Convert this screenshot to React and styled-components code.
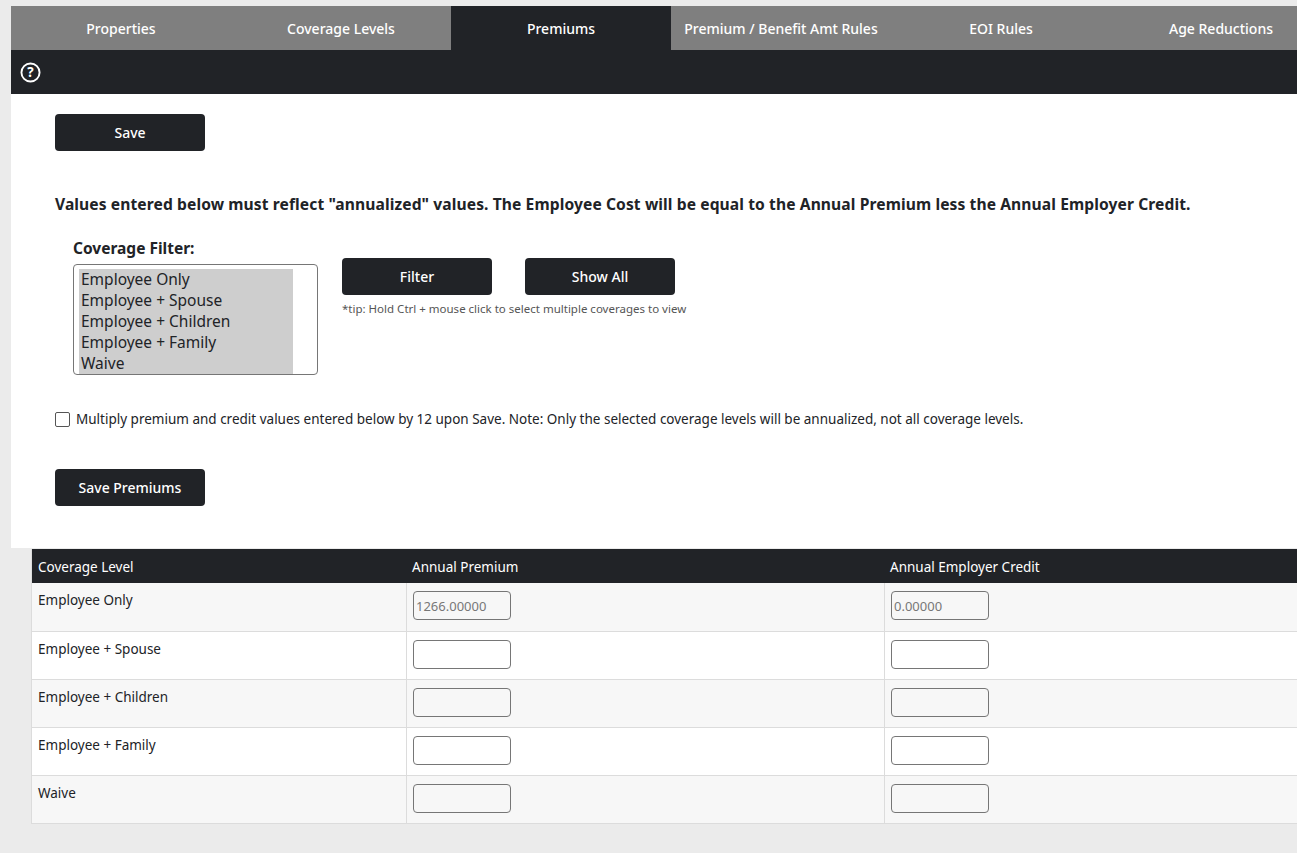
import React from "react";
import styled, { createGlobalStyle } from "styled-components";

const Global = createGlobalStyle`
  html, body { margin:0; padding:0; background:#ebebeb; font-family:"Noto Sans", sans-serif; color:#212327; overflow:hidden; }
`;
const Page = styled.div`width:1297px;height:853px;overflow:hidden;padding-top:6px;box-sizing:border-box;`;
const Panel = styled.div`margin-left:11px;width:1320px;background:#fff;`;
const Tabs = styled.div`display:flex;height:44px;background:#7f7f7f;`;
const Tab = styled.div`width:220px;flex:none;display:flex;align-items:center;justify-content:center;color:#fff;font-size:14px;font-weight:500;background:${p=>p.active?"#212327":"transparent"};`;
const HelpBar = styled.div`height:44px;background:#212327;display:flex;align-items:center;padding-left:9px;`;
const Body = styled.div`padding:20px 44px 42px;`;
const Btn = styled.button`width:150px;height:37px;background:#212327;color:#fff;border:none;border-radius:4px;font-family:inherit;font-size:14px;font-weight:500;`;
const Notice = styled.p`margin:42px 0 22px;font-size:15.6px;font-weight:700;letter-spacing:0.1px;white-space:nowrap;`;
const FilterRow = styled.div`display:flex;gap:24px;padding-left:18px;`;
const Label = styled.div`font-size:15.5px;font-weight:700;margin-bottom:5px;`;
const ListBox = styled.div`width:238px;height:105px;border:1px solid #767676;border-radius:4px;padding:4px 0 0 5px;`;
const Opt = styled.div`background:#cecece;width:212px;font-size:15.5px;line-height:21px;padding-left:2px;`;
const Btns = styled.div`padding-top:21px;`;
const BtnRow = styled.div`display:flex;gap:33px;`;
const Tip = styled.div`font-size:11.5px;color:#555;margin-top:6px;`;
const Check = styled.label`display:flex;align-items:center;gap:6px;font-size:13.5px;margin:35px 0 41px;white-space:nowrap;`;
const Box = styled.span`width:13px;height:13px;border:1px solid #555;border-radius:2px;`;
const Table = styled.div`margin:1px 0 0 31px;width:1290px;`;
const Row = styled.div`display:grid;grid-template-columns:374px 478px 1fr;height:${p=>p.h}px;background:${p=>p.head?"#212327":p.alt?"#f7f7f7":"#fff"};color:${p=>p.head?"#fff":"#212327"};border-bottom:${p=>p.head?"none":"1px solid #dcdcdc"};border-left:1px solid #dcdcdc;box-sizing:border-box;`;
const Cell = styled.div`padding:${p=>p.head?"9px 6px":"8px 6px"};font-size:13.5px;${p=>p.sep?"border-left:1px solid #dcdcdc;":""}`;
const Input = styled.div`width:98px;height:29px;border:1px solid #767676;border-radius:4px;font-size:13px;color:#777;display:flex;align-items:center;padding-left:2px;box-sizing:border-box;`;

const rows=["Employee Only","Employee + Spouse","Employee + Children","Employee + Family","Waive"];

export default function App(){
  return <Page><Global/>
    <Panel>
      <Tabs>{["Properties","Coverage Levels","Premiums","Premium / Benefit Amt Rules","EOI Rules","Age Reductions"].map(t=><Tab key={t} active={t==="Premiums"}>{t}</Tab>)}</Tabs>
      <HelpBar><svg width="21" height="21" viewBox="0 0 22 22"><circle cx="11" cy="11" r="9.5" fill="none" stroke="#fff" strokeWidth="2"/><text x="11" y="16" textAnchor="middle" fill="#fff" fontSize="14" fontWeight="700" fontFamily="Noto Sans">?</text></svg></HelpBar>
      <Body>
        <Btn>Save</Btn>
        <Notice>Values entered below must reflect "annualized" values. The Employee Cost will be equal to the Annual Premium less the Annual Employer Credit.</Notice>
        <FilterRow>
          <div><Label>Coverage Filter:</Label><ListBox>{rows.map(r=><Opt key={r}>{r}</Opt>)}</ListBox></div>
          <Btns><BtnRow><Btn>Filter</Btn><Btn>Show All</Btn></BtnRow><Tip>*tip: Hold Ctrl + mouse click to select multiple coverages to view</Tip></Btns>
        </FilterRow>
        <Check><Box/>Multiply premium and credit values entered below by 12 upon Save. Note: Only the selected coverage levels will be annualized, not all coverage levels.</Check>
        <Btn>Save Premiums</Btn>
      </Body>
    </Panel>
    <Table>
      <Row head h={34}><Cell head>Coverage Level</Cell><Cell head>Annual Premium</Cell><Cell head>Annual Employer Credit</Cell></Row>
      {rows.map((r,i)=><Row key={r} alt={i%2===0} h={i===0?49:48}><Cell>{r}</Cell><Cell sep><Input>{i===0?"1266.00000":""}</Input></Cell><Cell sep><Input>{i===0?"0.00000":""}</Input></Cell></Row>)}
    </Table>
  </Page>;
}
